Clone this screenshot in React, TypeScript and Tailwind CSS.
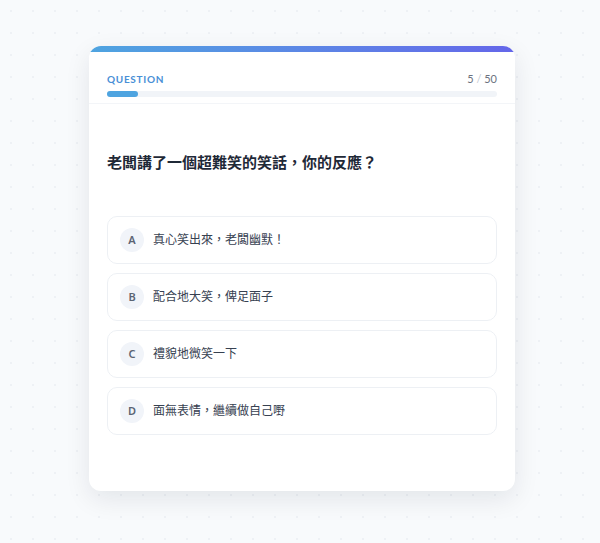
import React from "react";

const options = [
  { k: "A", t: "真心笑出來，老闆幽默！" },
  { k: "B", t: "配合地大笑，俾足面子" },
  { k: "C", t: "禮貌地微笑一下" },
  { k: "D", t: "面無表情，繼續做自己嘢" },
];

export default function App() {
  return (
    <div
      className="w-[600px] h-[543px] bg-[#f8fafc] bg-[radial-gradient(#eef1f5_1px,transparent_1px)] bg-[size:22px_22px] pt-[46px] pl-[89px]"
      style={{ fontFamily: '"Noto Sans", "Noto Sans CJK TC", sans-serif' }}
    >
      <div className="w-[426px] h-[445px] bg-white rounded-[12px] overflow-hidden shadow-[0_8px_26px_rgba(15,23,42,0.09)]">
        <div className="h-[6px] bg-gradient-to-r from-[#4ea4e0] to-[#6466e9]" />
        <div className="px-[18px] pt-[19px] pb-[6px] border-b border-[#f3f5f8]">
          <div className="flex items-center justify-between h-[16px] font-['Lato',sans-serif]">
            <span className="text-[10px] font-bold tracking-[0.07em] text-[#4a8fd6]">QUESTION</span>
            <span className="text-[11px] text-[#6b7280]">
              5 <span className="text-[#c4c9d2]">/</span> 50
            </span>
          </div>
          <div className="mt-[4px] h-[6px] rounded-full bg-[#f1f4f8]">
            <div className="h-full w-[8%] rounded-full bg-[#4ea4e0]" />
          </div>
        </div>
        <div className="px-[18px]">
          <h1 className="mt-[46px] text-[15px] font-bold text-[#1f2937] leading-[24px]">
            老闆講了一個超難笑的笑話，你的反應？
          </h1>
          <div className="mt-[42px] flex flex-col gap-[9px]">
            {options.map((o) => (
              <div
                key={o.k}
                className="h-[48px] flex items-center gap-[9px] px-[12px] border border-[#edf0f4] rounded-[10px]"
              >
                <span className="w-[24px] h-[24px] rounded-full bg-[#f1f4f9] flex items-center justify-center text-[11px] font-semibold text-[#5b6473]">
                  {o.k}
                </span>
                <span className="text-[12px] text-[#374151]">{o.t}</span>
              </div>
            ))}
          </div>
        </div>
      </div>
    </div>
  );
}
